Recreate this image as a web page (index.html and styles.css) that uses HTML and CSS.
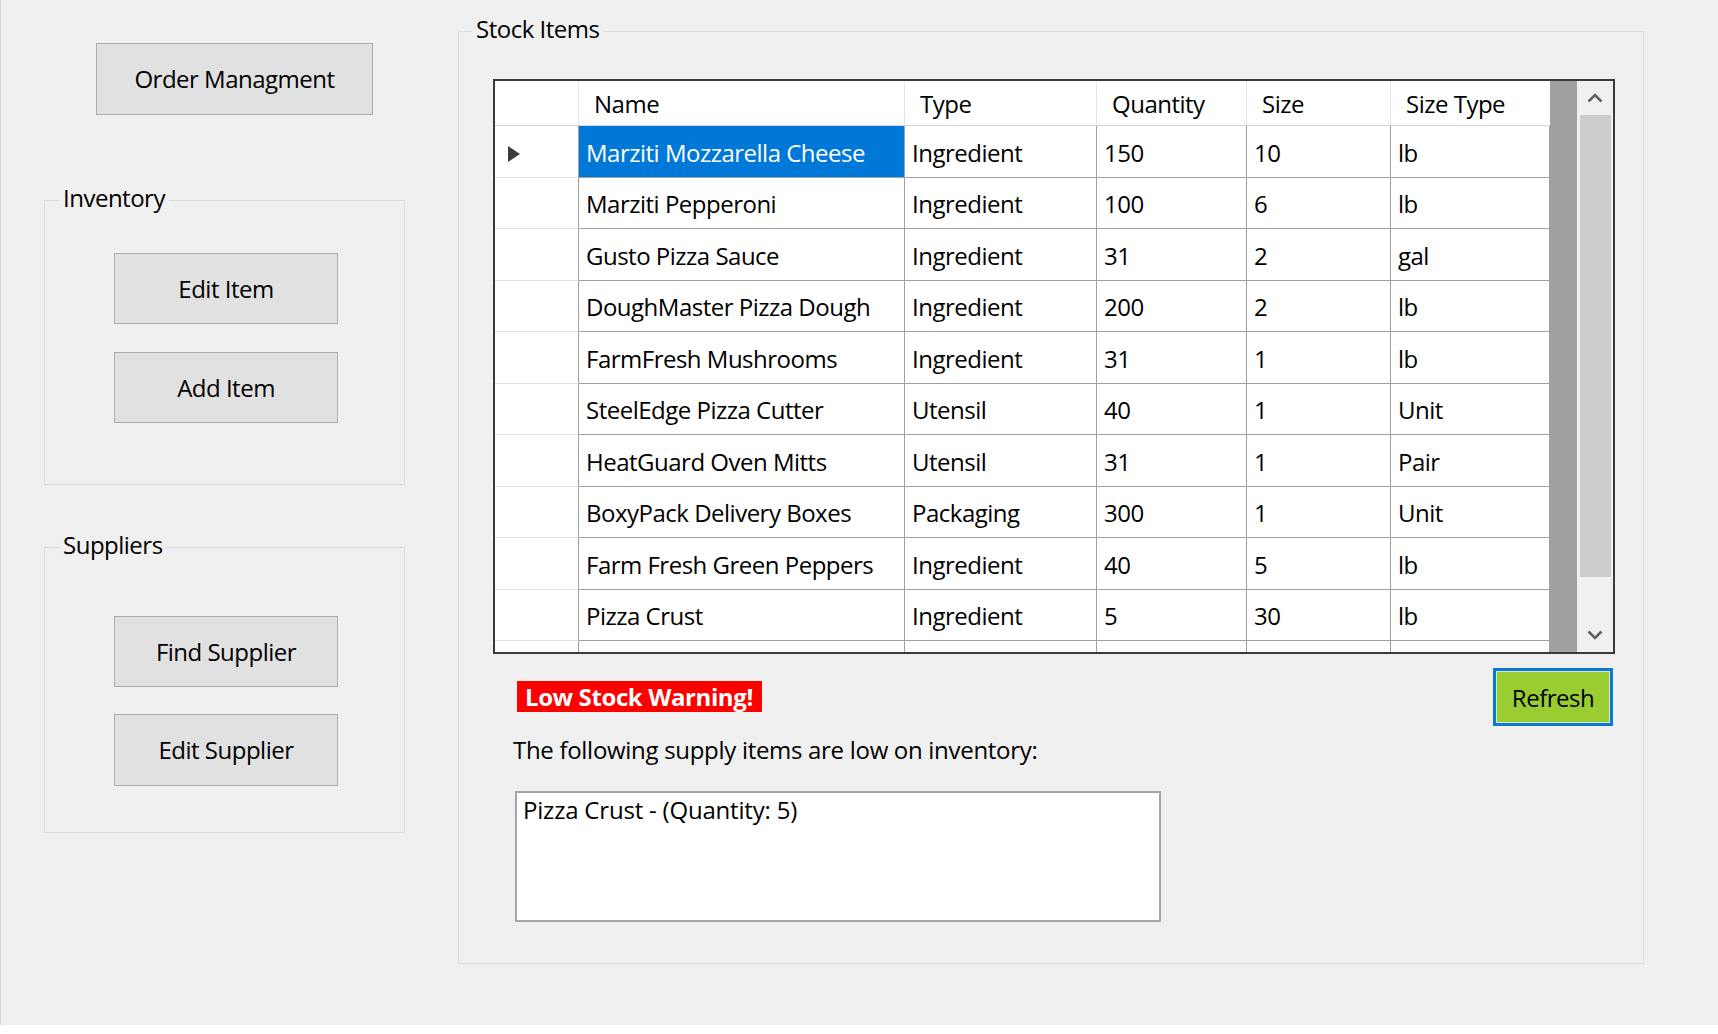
FILE: index.html
```html
<!DOCTYPE html>
<html lang="en">
<head>
<meta charset="utf-8">
<title>Stock Items</title>
<link rel="stylesheet" href="styles.css">
</head>
<body>
<div class="window">
  <aside class="sidebar">
    <button class="btn btn-order">Order Managment</button>

    <section class="group group-inventory">
      <div class="group-title">Inventory</div>
      <button class="btn btn-side btn-first">Edit Item</button>
      <button class="btn btn-side btn-second">Add Item</button>
    </section>

    <section class="group group-suppliers">
      <div class="group-title">Suppliers</div>
      <button class="btn btn-side btn-first-sup">Find Supplier</button>
      <button class="btn btn-side btn-second-sup">Edit Supplier</button>
    </section>
  </aside>

  <section class="group group-stock">
    <div class="group-title title-stock">Stock Items</div>

    <div class="grid">
      <div class="grid-body">
        <table class="data">
          <thead>
            <tr class="head-row">
              <th class="rh"></th>
              <th class="c-name">Name</th>
              <th class="c-type">Type</th>
              <th class="c-qty">Quantity</th>
              <th class="c-size">Size</th>
              <th class="c-stype">Size Type</th>
            </tr>
          </thead>
          <tbody>
            <tr>
              <td class="rh"><span class="row-arrow"></span></td>
              <td class="selected">Marziti Mozzarella Cheese</td>
              <td>Ingredient</td><td>150</td><td>10</td><td>lb</td>
            </tr>
            <tr>
              <td class="rh"></td>
              <td>Marziti Pepperoni</td>
              <td>Ingredient</td><td>100</td><td>6</td><td>lb</td>
            </tr>
            <tr>
              <td class="rh"></td>
              <td>Gusto Pizza Sauce</td>
              <td>Ingredient</td><td>31</td><td>2</td><td>gal</td>
            </tr>
            <tr>
              <td class="rh"></td>
              <td>DoughMaster Pizza Dough</td>
              <td>Ingredient</td><td>200</td><td>2</td><td>lb</td>
            </tr>
            <tr>
              <td class="rh"></td>
              <td>FarmFresh Mushrooms</td>
              <td>Ingredient</td><td>31</td><td>1</td><td>lb</td>
            </tr>
            <tr>
              <td class="rh"></td>
              <td>SteelEdge Pizza Cutter</td>
              <td>Utensil</td><td>40</td><td>1</td><td>Unit</td>
            </tr>
            <tr>
              <td class="rh"></td>
              <td>HeatGuard Oven Mitts</td>
              <td>Utensil</td><td>31</td><td>1</td><td>Pair</td>
            </tr>
            <tr>
              <td class="rh"></td>
              <td>BoxyPack Delivery Boxes</td>
              <td>Packaging</td><td>300</td><td>1</td><td>Unit</td>
            </tr>
            <tr>
              <td class="rh"></td>
              <td>Farm Fresh Green Peppers</td>
              <td>Ingredient</td><td>40</td><td>5</td><td>lb</td>
            </tr>
            <tr>
              <td class="rh"></td>
              <td>Pizza Crust</td>
              <td>Ingredient</td><td>5</td><td>30</td><td>lb</td>
            </tr>
            <tr>
              <td class="rh"></td>
              <td>&nbsp;</td>
              <td>&nbsp;</td><td>&nbsp;</td><td>&nbsp;</td><td>&nbsp;</td>
            </tr>
          </tbody>
        </table>
      </div>
      <div class="grid-filler"></div>
      <div class="scrollbar">
        <div class="sb-btn">
          <svg width="16" height="10" viewBox="0 0 16 10"><polyline points="1.5,8.5 8,2 14.5,8.5" fill="none" stroke="#606060" stroke-width="2.6"/></svg>
        </div>
        <div class="sb-thumb"></div>
        <div class="sb-track"></div>
        <div class="sb-btn">
          <svg width="16" height="10" viewBox="0 0 16 10"><polyline points="1.5,1.5 8,8 14.5,1.5" fill="none" stroke="#606060" stroke-width="2.6"/></svg>
        </div>
      </div>
    </div>

    <div class="status-row">
      <span class="warning">Low Stock Warning!</span>
      <button class="btn-refresh">Refresh</button>
    </div>

    <p class="low-text">The following supply items are low on inventory:</p>

    <div class="low-box">Pizza Crust - (Quantity: 5)</div>
  </section>
</div>
</body>
</html>
```

FILE: styles.css
```css
* {
  box-sizing: border-box;
}

html, body {
  margin: 0;
  padding: 0;
}

body {
  background: #ffffff;
  font-family: "Open Sans", "Noto Sans", "Liberation Sans", sans-serif;
  font-size: 24px;
  letter-spacing: -0.5px;
  color: #000000;
}

.window {
  height: 1025px;
  background: #f0f0f0;
  display: flex;
  align-items: flex-start;
  box-shadow: inset 1px 0 0 #d6d6d6;
}

/* ---------- sidebar ---------- */
.sidebar {
  width: 458px;
  flex: none;
  display: flex;
  flex-direction: column;
  align-items: flex-start;
}

.btn {
  font-family: inherit;
  font-size: 24px;
  letter-spacing: -0.5px;
  color: #000;
  background: #e1e1e1;
  border: 1px solid #adadad;
  padding: 0;
  margin: 0;
  line-height: 30px;
  display: block;
}

.btn-order {
  margin: 43px 0 0 96px;
  width: 277px;
  height: 72px;
}

.group {
  border: 1px solid #dcdcdc;
  display: flex;
  flex-direction: column;
  align-items: flex-start;
}

.group-title {
  margin: -16px 0 0 14px;
  padding: 0 4px;
  line-height: 26px;
  height: 26px;
  background: #f0f0f0;
  white-space: nowrap;
}

.group-inventory {
  margin: 85px 0 0 44px;
  width: 361px;
  height: 285px;
}

.group-suppliers {
  margin: 62px 0 0 44px;
  width: 361px;
  height: 286px;
}

.btn-side {
  width: 224px;
  height: 71px;
  margin-left: 69px;
}

.btn-first { margin-top: 42px; }
.btn-second { margin-top: 28px; }
.btn-first-sup { margin-top: 58px; }
.btn-second-sup { margin-top: 27px; height: 72px; }

/* ---------- stock group ---------- */
.group-stock {
  margin-top: 31px;
  width: 1186px;
  height: 933px;
}

.title-stock {
  margin-left: 13px;
}

.grid {
  margin: 37px 0 0 34px;
  width: 1122px;
  height: 575px;
  border: 2px solid #3a3a3a;
  display: flex;
  background: #a0a0a0;
}

.grid-body {
  width: 1055px;
  flex: none;
  overflow: hidden;
  background: #a0a0a0;
}

.data {
  border-collapse: separate;
  border-spacing: 0;
  table-layout: fixed;
  width: 1055px;
  background: #ffffff;
}

.data th,
.data td {
  padding: 3px 0 0 7px;
  text-align: left;
  vertical-align: middle;
  white-space: nowrap;
  overflow: hidden;
  font-weight: normal;
  line-height: 32px;
  border-right: 1px solid #a0a0a0;
  border-bottom: 1px solid #a0a0a0;
}

.data th {
  padding: 1px 0 0 15px;
  border-right: 1px solid #e6e6e6;
  border-bottom: 1px solid #d4d4d4;
}

.head-row {
  height: 45px;
}

.data tbody tr {
  height: 51.5px;
}

.data .rh {
  width: 84px;
  padding: 0;
}

.data th.rh {
  border-right: 1px solid #e6e6e6;
}

.data td.rh {
  border-bottom: 1px solid #e3e3e3;
  border-right: 1px solid #a0a0a0;
}

.c-name { width: 326px; }
.c-type { width: 192px; }
.c-qty { width: 150px; }
.c-size { width: 144px; }
.c-stype { width: 159px; }

.data th.c-stype {
  border-right: none;
}

.data td.selected {
  background: #0078d7;
  color: #ffffff;
}

.row-arrow {
  display: block;
  width: 0;
  height: 0;
  margin: 5px 0 0 13px;
  border-left: 12px solid #3c3c3c;
  border-top: 8px solid transparent;
  border-bottom: 8px solid transparent;
}

.grid-filler {
  width: 27px;
  flex: none;
  background: #a0a0a0;
}

.scrollbar {
  width: 36px;
  flex: none;
  background: #f0f0f0;
  display: flex;
  flex-direction: column;
}

.sb-btn {
  height: 34px;
  flex: none;
  display: flex;
  align-items: center;
  justify-content: center;
}

.sb-thumb {
  height: 462px;
  flex: none;
  margin: 0 2px 0 3px;
  background: #cdcdcd;
}

.sb-track {
  flex: 1;
}

.status-row {
  width: 100%;
  display: flex;
  justify-content: space-between;
  align-items: flex-start;
  padding: 0 30px 0 58px;
}

.warning {
  margin-top: 27px;
  height: 31px;
  line-height: 31px;
  padding: 0 9px 0 8px;
  background: #ff0000;
  color: #ffffff;
  font-weight: bold;
  letter-spacing: -0.4px;
}

.btn-refresh {
  margin-top: 14px;
  width: 120px;
  height: 58px;
  padding: 0;
  font-family: inherit;
  font-size: 24px;
  letter-spacing: -0.5px;
  color: #000;
  background: #9acd32;
  border: 3px solid #0a78d6;
  box-shadow: inset 0 0 0 1px #d7e8c0;
}

.low-text {
  margin: 9px 0 0 54px;
  line-height: 30px;
  letter-spacing: -0.3px;
}

.low-box {
  margin: 26px 0 0 56px;
  width: 646px;
  height: 131px;
  background: #ffffff;
  border: 2px solid #a3a6ad;
  padding: 2px 0 0 6px;
  line-height: 30px;
  letter-spacing: -0.2px;
}
```
